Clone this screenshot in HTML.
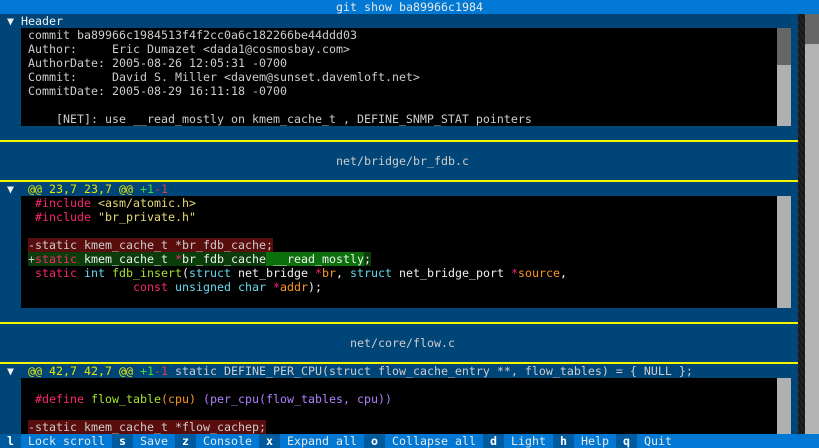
<!DOCTYPE html>
<html><head><meta charset="utf-8"><style>
*{margin:0;padding:0;box-sizing:border-box}
body{width:819px;height:448px;overflow:hidden;background:#004578;font-family:"DejaVu Sans Mono","Liberation Mono",monospace;font-size:11.63px;line-height:14px;color:#ccc;position:relative}
.a{position:absolute;white-space:pre}
.blk{position:absolute;left:21px;width:756px;background:#000}
.sb{position:absolute;left:777px;width:14px;background:#b0b0b0}
.y{position:absolute;left:0;width:798px;height:2px;background:#f5f500}
.k{color:#f92672}.s{color:#e6db74}.f{color:#a6e22e}.t{color:#66d9ef}.o{color:#fd971f}.p{color:#ae81ff}.w{color:#f0f0f0}
.hy{color:#e6e600}.g{color:#3ddc3d}.r{color:#e04040}
.del{background:#5a0d0d}.add{background:#0b3d0b}.add2{background:#0b700b}
#foot{position:absolute;left:0;top:434px;width:819px;height:14px;background:#0078d4;color:#e8e8e8}
#foot b{background:#005a9e;color:#fff}
</style></head><body>
<div class="a" style="left:0;top:0;width:819px;height:14px;background:#0078d4;color:#e8e8e8;text-align:center">git show ba89966c1984</div>
<div style="position:absolute;left:798px;top:14px;width:7px;height:434px;background:repeating-linear-gradient(60deg,#222 0 3px,#111 3px 4px)"></div>
<div style="position:absolute;left:805px;top:14px;width:14px;height:420px;background:#b4b4b4"></div>
<div style="position:absolute;left:805px;top:14px;width:14px;height:30px;background:#666"></div>

<div class="a w" style="left:7px;top:14px">▼ Header</div>
<div class="blk" style="top:28px;height:98px"></div>
<div class="sb" style="top:28px;height:98px"></div>
<div class="sb" style="top:28px;height:37px;background:#666"></div>
<div class="a" style="left:28px;top:28px">commit ba89966c1984513f4f2cc0a6c182266be44ddd03
Author:     Eric Dumazet &lt;dada1@cosmosbay.com&gt;
AuthorDate: 2005-08-26 12:05:31 -0700
Commit:     David S. Miller &lt;davem@sunset.davemloft.net&gt;
CommitDate: 2005-08-29 16:11:18 -0700

    [NET]: use __read_mostly on kmem_cache_t , DEFINE_SNMP_STAT pointers</div>

<div class="y" style="top:140px"></div>
<div class="a" style="left:0;top:154px;width:805px;text-align:center">net/bridge/br_fdb.c</div>
<div class="y" style="top:180px"></div>
<div class="a" style="left:7px;top:182px"><span class="w">▼</span>  <span class="hy">@@ 23,7 23,7 @@ </span><span class="g">+1</span><span class="r">-1</span></div>
<div class="blk" style="top:196px;height:112px"></div>
<div class="sb" style="top:196px;height:112px"></div>
<div class="a" style="left:28px;top:196px"> <span class="k">#include</span> <span class="s">&lt;asm/atomic.h&gt;</span>
 <span class="k">#include</span> <span class="s">"br_private.h"</span>

<span class="del">-static kmem_cache_t *br_fdb_cache;</span>
<span class="add">+<span class="k">static</span> <span class="w">kmem_cache_t</span> <span class="k">*</span><span class="w">br_fdb_cache</span><span class="add2 w"> __read_mostly</span><span class="w">;</span></span>
 <span class="k">static</span> <span class="t">int</span> <span class="f">fdb_insert</span><span class="w">(</span><span class="t">struct</span> <span class="w">net_bridge</span> <span class="k">*</span><span class="o">br</span><span class="w">,</span> <span class="t">struct</span> <span class="w">net_bridge_port</span> <span class="k">*</span><span class="o">source</span><span class="w">,</span>
               <span class="k">const</span> <span class="t">unsigned</span> <span class="t">char</span> <span class="k">*</span><span class="o">addr</span><span class="w">);</span></div>

<div class="y" style="top:322px"></div>
<div class="a" style="left:0;top:336px;width:805px;text-align:center">net/core/flow.c</div>
<div class="y" style="top:362px"></div>
<div class="a" style="left:7px;top:364px"><span class="w">▼</span>  <span class="hy">@@ 42,7 42,7 @@ </span><span class="g">+1</span><span class="r">-1</span> static DEFINE_PER_CPU(struct flow_cache_entry **, flow_tables) = { NULL };</div>
<div class="blk" style="top:378px;height:56px"></div>
<div class="sb" style="top:378px;height:56px"></div>
<div class="a" style="left:28px;top:378px">
 <span class="k">#define</span> <span class="f">flow_table</span><span class="o">(cpu)</span> <span class="p">(per_cpu(flow_tables, cpu))</span>

<span class="del">-static kmem_cache_t *flow_cachep;</span></div>

<div id="foot" class="a"><b> l </b> Lock scroll <b> s </b> Save <b> z </b> Console <b> x </b> Expand all <b> o </b> Collapse all <b> d </b> Light <b> h </b> Help <b> q </b> Quit</div>
</body></html>
